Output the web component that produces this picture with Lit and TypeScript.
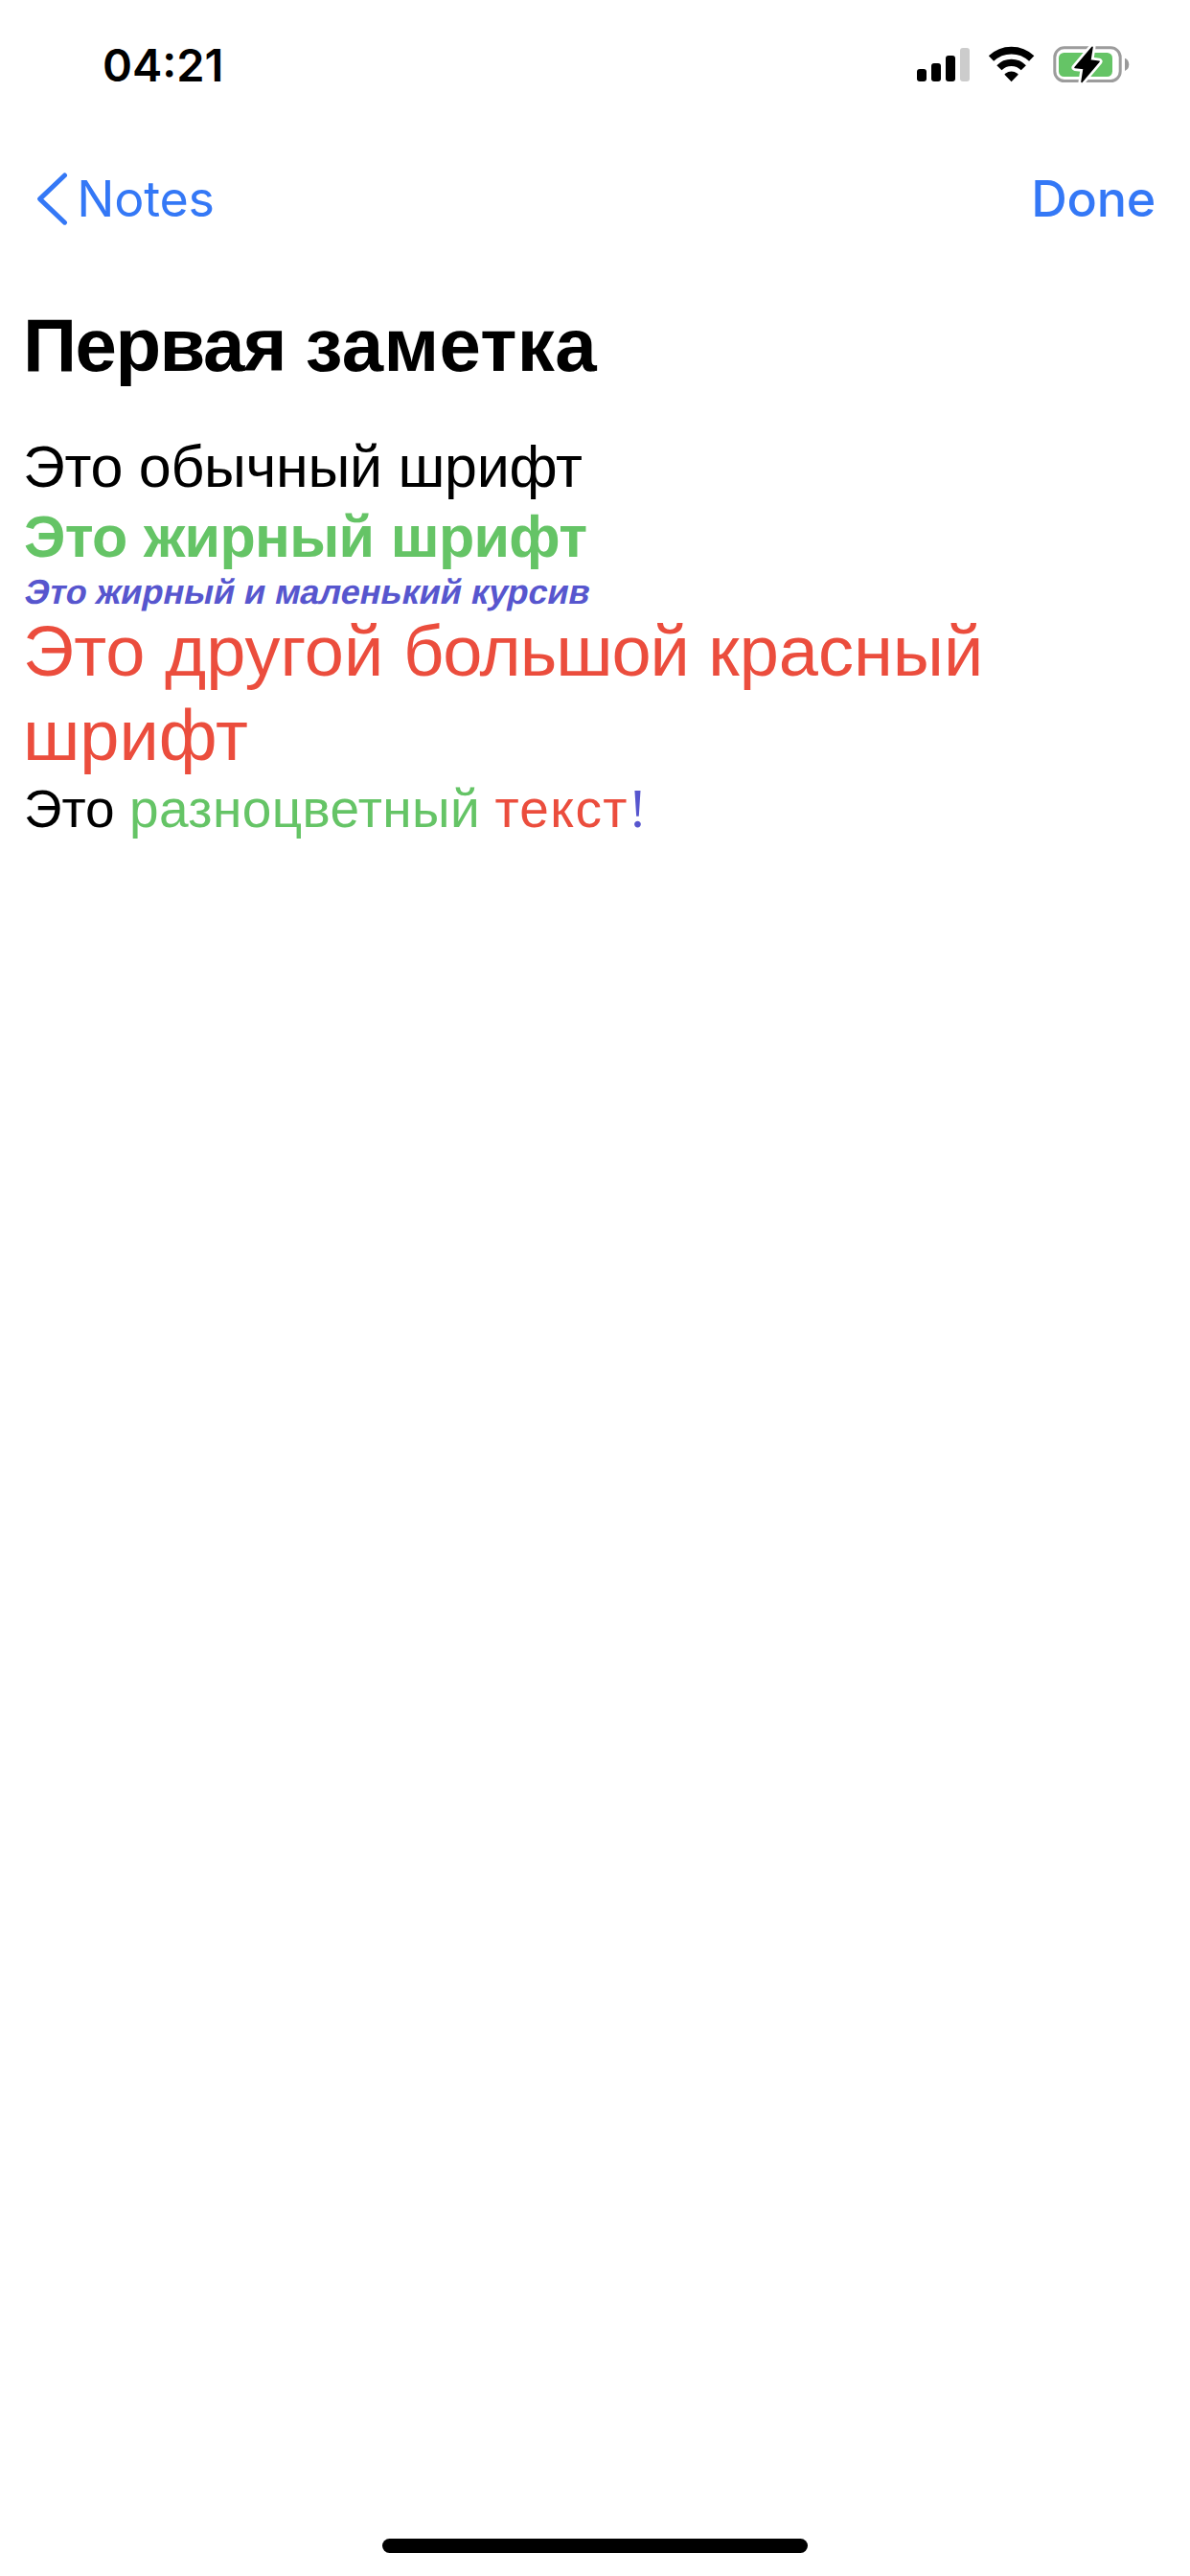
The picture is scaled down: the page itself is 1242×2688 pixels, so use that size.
import { LitElement, html, css } from "lit";
import { customElement } from "lit/decorators.js";

@customElement("status-bar")
class StatusBar extends LitElement {
  static styles = css`
    :host {
      display: flex;
      align-items: center;
      justify-content: space-between;
      box-sizing: border-box;
      height: 135px;
      padding: 0 63px 0 107px;
      color: #000;
    }
    .time {
      font: 600 47px/57px Inter, sans-serif;
    }
    .icons {
      display: flex;
      align-items: center;
      gap: 20px;
    }
    svg {
      display: block;
      overflow: visible;
    }
  `;

  render() {
    return html`
      <span class="time">04:21</span>
      <div class="icons">
        <svg width="55" height="39" viewBox="0 0 55 39">
          <rect x="0" y="24" width="10" height="13" rx="3" />
          <rect x="15" y="18" width="10" height="19" rx="3" />
          <rect x="30" y="10" width="10" height="27" rx="3" />
          <rect x="45" y="2" width="10" height="35" rx="3" fill="#ccc" />
        </svg>
        <svg width="47" height="39" viewBox="0 0 47 39">
          <g fill="none" stroke="#000">
            <path d="M2.5 13.1A30.4 30.4 0 0 1 44.7 13.1" stroke-width="7.6" />
            <path d="M10.9 22.7A17.7 17.7 0 0 1 36.3 22.7" stroke-width="7.2" />
          </g>
          <path d="M23.6 37.2L16.6 30.1Q16.4 29.3 17.2 28.8Q23.6 24.2 30 28.8Q30.8 29.3 30.6 30.1Z" />
        </svg>
        <svg width="80" height="39" viewBox="0 0 80 39">
          <rect x="1.8" y="1.8" width="68.4" height="34.8" rx="10" fill="none" stroke="#9c9c9c" stroke-width="3" />
          <rect x="6" y="7" width="56" height="25" rx="5.5" fill="#65c466" />
          <path d="M75 12.7Q79.3 14.5 79.3 19.3Q79.3 24.2 75 26Z" fill="#999" />
          <path
            d="M41 1.2L23 22.4L32.2 23.4L30 37.4L48 16.2L38.8 15Z"
            stroke="#fff"
            stroke-width="7"
            stroke-linejoin="round"
          />
          <path
            d="M41 1.2L23 22.4L32.2 23.4L30 37.4L48 16.2L38.8 15Z"
            stroke="#000"
            stroke-width="1.6"
            stroke-linejoin="round"
          />
        </svg>
      </div>
    `;
  }
}

@customElement("nav-bar")
class NavBar extends LitElement {
  static styles = css`
    :host {
      display: flex;
      align-items: center;
      justify-content: space-between;
      box-sizing: border-box;
      height: 145px;
      padding: 0 35.8px 0 38px;
      color: #3478f6;
      font: 400 52px/63px Inter, sans-serif;
    }
    .back {
      display: flex;
      align-items: center;
      gap: 8.3px;
      letter-spacing: -0.25px;
    }
    .done {
      font-weight: 500;
      letter-spacing: -0.2px;
    }
    svg {
      display: block;
    }
  `;

  render() {
    return html`
      <div class="back">
        <svg width="34" height="55" viewBox="0 0 34 55">
          <path
            d="M29.5 3L3.6 27.6L29.5 52.2"
            fill="none"
            stroke="currentColor"
            stroke-width="5"
            stroke-linecap="round"
            stroke-linejoin="round"
          />
        </svg>
        <span>Notes</span>
      </div>
      <span class="done">Done</span>
    `;
  }
}

@customElement("note-body")
class NoteBody extends LitElement {
  static styles = css`
    :host {
      display: block;
      padding: 35px 25px 0 24px;
      color: #000;
      font-family: "Liberation Sans", sans-serif;
    }
    h1,
    p {
      margin: 0;
    }
    h1 {
      margin-bottom: 46px;
      font: 700 78px/90px "Liberation Sans", sans-serif;
      letter-spacing: 0.35px;
      word-spacing: -1.2px;
    }
    h1 .tight {
      letter-spacing: -1.5px;
    }
    .plain,
    .bold {
      font-size: 61px;
      line-height: 73px;
      letter-spacing: -0.3px;
    }
    .bold {
      margin-bottom: 2px;
      padding-left: 1px;
      font-weight: 700;
      letter-spacing: -0.7px;
      word-spacing: 1.2px;
    }
    /* Slanted upright face: keeps the roman form of "т" */
    .small {
      font-size: 36px;
      line-height: 37px;
      font-weight: 700;
      transform: skewX(-12deg);
      transform-origin: 0 31px;
    }
    .large {
      font-size: 74px;
      line-height: 88px;
    }
    .large .tight {
      letter-spacing: -1.1px;
    }
    .mixed {
      padding-left: 1px;
      font-size: 55px;
      line-height: 64px;
    }
    .green {
      color: #65c466;
    }
    .indigo {
      color: #5756ce;
    }
    .red {
      color: #eb4d3d;
    }
    .mixed .green {
      letter-spacing: 0.39px;
    }
    .mixed .red {
      letter-spacing: 1.4px;
    }
    .mark {
      font-family: "Liberation Serif", serif;
      font-size: 57px;
      line-height: 0;
    }
  `;

  render() {
    return html`
      <h1><span class="tight">Первая</span> заметка</h1>
      <p class="plain">Это обычный шрифт</p>
      <p class="bold green">Это жирный шрифт</p>
      <p class="small indigo">Это жирный и маленький курсив</p>
      <p class="large red">
        Это другой <span class="tight">большой</span> <span>красный</span> <span>шрифт</span>
      </p>
      <p class="mixed">
        Это <span class="green">разноцветный</span> <span class="red">текст</span><span class="mark indigo">!</span>
      </p>
    `;
  }
}

@customElement("app-root")
class AppRoot extends LitElement {
  static styles = css`
    :host {
      display: flex;
      flex-direction: column;
      box-sizing: border-box;
      height: 100vh;
      background: #fff;
      overflow: hidden;
    }
    note-body {
      flex: 1;
    }
    .home {
      align-self: center;
      width: 444px;
      height: 15px;
      margin-bottom: 24px;
      border-radius: 8px;
      background: #000;
    }
  `;

  render() {
    return html`
      <status-bar></status-bar>
      <nav-bar></nav-bar>
      <note-body></note-body>
      <div class="home"></div>
    `;
  }
}
